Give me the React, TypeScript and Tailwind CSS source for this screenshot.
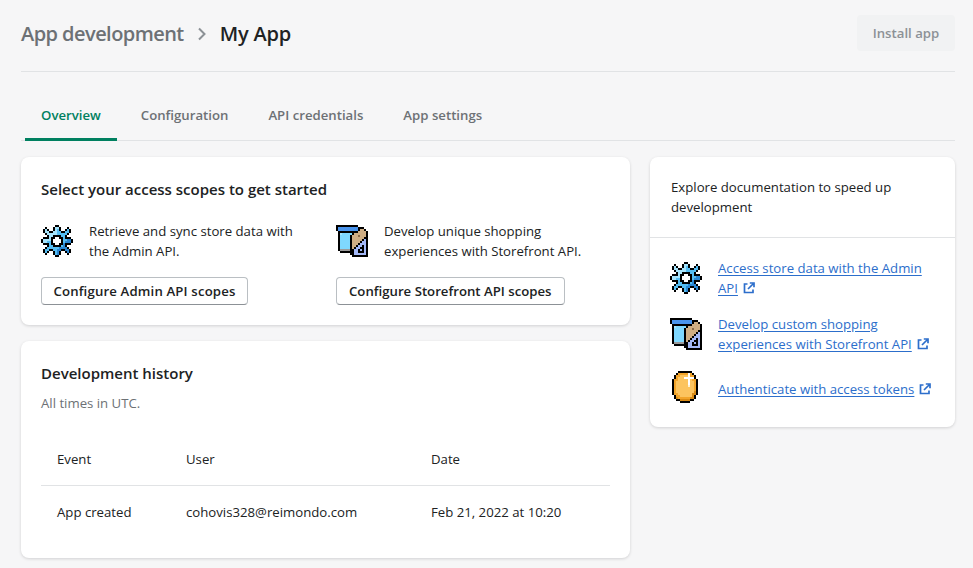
import React from 'react';

const palette: Record<string, string> = {
  K: '#000000',
  W: '#ffffff',
  L: '#a6e4fc',
  B: '#55bdf2',
  D: '#2a86d2',
  G: '#9a9a9a',
  S: '#7fd8ff',
  N: '#4a94ec',
  T: '#cfae84',
  U: '#8a6a48',
  P: '#a3b8f7',
  O: '#f2a42a',
  Y: '#fcc45f',
  R: '#d98a14',
  H: '#fff1d0',
};

const gear = [
  '.......KK.......',
  '..K...KLLK...K..',
  '.KLK..KLBK..KBK.',
  '.KLLKKLLBBKKBBK.',
  '..KLLLLLBBBBBK..',
  '...KLLKKKKBBK...',
  '.KKKLKKWWKKBKKK.',
  'KLLLLKWWWWKBBDDK',
  'KLLBBKWWWWKBDDDK',
  '.KKKBKKWWKKDKKK.',
  '...KBBKKKKBDK...',
  '..KBBBBBBDDDDK..',
  '.KBBKKBBDDKKDDK.',
  '.KBK..KBDK..KDK.',
  '..K...KBDK...K..',
  '.......KK.......',
];

const storefront = [
  'KKKKKKKKKKK.....',
  'KNNNNNNNNNNKKK..',
  'KNNNNNNNNNNKTTK.',
  '.KKKKKKKKKKTTTTK',
  '.KLSSSSSKTTTTTTK',
  '.KSSSSSKTTTUTTTK',
  '.KSSSSSKTTTTTTKK',
  '.KSSSSSKTTTTTKPK',
  '.KSSSSSKTTTTKPPK',
  '.KSSSSSKTTTKPPPK',
  '.KSSSSSKTTKPPKPK',
  '.KSSSSSKTKPPKKPK',
  '.KGGGGGKKPPKPKPK',
  '..KKKKKKKPPKKKPK',
  '.......KKPPPPPPK',
  '........KKKKKKKK',
];

const coin = [
  '...KKKKKKK...',
  '..KOOOOOWOK..',
  '.KOOYYYYWOOK.',
  '.KOYYYWWWWWK.',
  'KOOYYYYYWYOOK',
  'KOYYYYYYWYYOK',
  'KOYYYYYYWYYOK',
  'KOYYYYYYHYYOK',
  'KOYYYYYYYYYOK',
  'KOYYYYYYYYYOK',
  'KOYYYYYYYYYRK',
  'KOOYYYYYYYRRK',
  '.KOOYYYYYYRK.',
  '.KROOOOOORRK.',
  '..KKRRRRRKK..',
  '....KKKKK....',
];

function PixelIcon({ rows, className }: { rows: string[]; className?: string }) {
  return (
    <svg
      className={className}
      width={rows[0].length * 2}
      height={rows.length * 2}
      viewBox={`0 0 ${rows[0].length} ${rows.length}`}
      shapeRendering="crispEdges"
    >
      {rows.map((row, y) =>
        row.split('').map((c, x) =>
          c === '.' ? null : <rect key={`${x}-${y}`} x={x} y={y} width={1} height={1} fill={palette[c]} />
        )
      )}
    </svg>
  );
}

function ExternalIcon() {
  return (
    <svg className="inline-block ml-[5px] align-[-1px]" width="12" height="12" viewBox="0 0 12 12" fill="none">
      <path d="M4.5 2H1.5V10.5H10V7.5" stroke="#2c6ecb" strokeWidth="1.7" />
      <path d="M5 7L10 2M6.8 1H11V5.2" stroke="#2c6ecb" strokeWidth="1.7" />
    </svg>
  );
}

function DocLink({ children }: { children: React.ReactNode }) {
  return (
    <span>
      <a className="text-[#2c6ecb] underline underline-offset-2">{children}</a>
      <ExternalIcon />
    </span>
  );
}

export default function App() {
  const tabs = ['Overview', 'Configuration', 'API credentials', 'App settings'];

  return (
    <div className="bg-[#f6f6f7] pl-[21px] pr-[18px] pt-[15px] font-['Open_Sans',sans-serif] text-[13.2px] leading-[20px] text-[#202223] overflow-hidden h-[568px] w-[973px]">
      {/* Header */}
      <div className="flex items-center justify-between pb-[20px] border-b border-[#e1e3e5]">
        <div className="flex items-center pt-[2px] text-[20px] font-semibold tracking-[-0.2px] leading-[34px]">
          <span className="text-[#6d7175] tracking-[-0.55px]">App development</span>
          <svg className="ml-[13px] mr-[13px]" width="10" height="14" viewBox="0 0 10 14" fill="none">
            <path d="M2 1.5L7.5 7L2 12.5" stroke="#8c9196" strokeWidth="2" />
          </svg>
          <span>My App</span>
        </div>
        <button className="w-[98px] h-[36px] rounded bg-[#f1f2f3] text-[#8c9196] font-semibold">Install app</button>
      </div>

      {/* Tabs */}
      <div className="flex h-[50px] mt-[18px] px-[4px] border-b border-[#e1e3e5] box-content">
        {tabs.map((tab, i) => (
          <div
            key={tab}
            className={`px-[16px] pt-[2px] flex items-center h-[51px] mr-[8px] font-semibold border-b-[3px] ${
              i === 0 ? 'text-[#008060] border-[#008060]' : 'text-[#6d7175] border-transparent'
            }`}
          >
            {tab}
          </div>
        ))}
      </div>

      <div className="flex gap-[20px] mt-[16px] items-start">
        {/* Left column */}
        <div className="w-[609px] flex flex-col gap-[16px]">
          <section className="h-[168px] bg-white rounded-lg shadow-[0_1px_3px_rgba(63,63,68,0.2)] p-[20px]">
            <h2 className="text-[15px] font-semibold leading-[24px]">Select your access scopes to get started</h2>
            <div className="flex mt-[20px]">
              <div className="w-[295px]">
                <div className="flex items-center gap-[16px]">
                  <PixelIcon rows={gear} className="shrink-0" />
                  <p className="w-[215px]">Retrieve and sync store data with the Admin API.</p>
                </div>
                <button className="mt-[16px] h-[28px] w-[207px] tracking-[0.15px] bg-white border border-[#babfc3] border-b-[#8c9196] rounded font-semibold">
                  Configure Admin API scopes
                </button>
              </div>
              <div>
                <div className="flex items-center gap-[16px]">
                  <PixelIcon rows={storefront} className="shrink-0" />
                  <p className="w-[215px]">Develop unique shopping experiences with Storefront API.</p>
                </div>
                <button className="mt-[16px] h-[28px] px-[12px] bg-white border border-[#babfc3] border-b-[#8c9196] rounded font-semibold">
                  Configure Storefront API scopes
                </button>
              </div>
            </div>
          </section>

          <section className="h-[217px] bg-white rounded-lg shadow-[0_1px_3px_rgba(63,63,68,0.2)] pt-[20px] px-[20px]">
            <h2 className="text-[15px] font-semibold leading-[24px]">Development history</h2>
            <p className="mt-[8px] text-[#6d7175]">All times in UTC.</p>
            <table className="w-[569px] mt-[20px] table-fixed text-left">
              <tbody>
                <tr className="h-[52px] border-b border-[#e1e3e5]">
                  <td className="w-[145px] pl-[16px]">Event</td>
                  <td className="w-[245px]">User</td>
                  <td>Date</td>
                </tr>
                <tr className="h-[53px]">
                  <td className="pl-[16px]">App created</td>
                  <td>cohovis328@reimondo.com</td>
                  <td>Feb 21, 2022 at 10:20</td>
                </tr>
              </tbody>
            </table>
          </section>
        </div>

        {/* Right column */}
        <aside className="w-[305px] h-[270px] bg-white rounded-lg shadow-[0_1px_3px_rgba(63,63,68,0.2)]">
          <div className="h-[81px] px-[21px] pt-[20px] border-b border-[#e1e3e5]">
            Explore documentation to speed up development
          </div>
          <div className="px-[20px] pt-[20px] flex flex-col">
            <div className="flex gap-[16px] items-center h-[40px] mb-[16px]">
              <PixelIcon rows={gear} className="shrink-0" />
              <DocLink>Access store data with the Admin API</DocLink>
            </div>
            <div className="flex gap-[16px] items-center h-[40px] mb-[17px]">
              <PixelIcon rows={storefront} className="shrink-0" />
              <DocLink>Develop custom shopping experiences with Storefront API</DocLink>
            </div>
            <div className="flex gap-[20px] pl-[2px] items-center h-[32px] [&>span]:pt-[4px]">
              <PixelIcon rows={coin} className="shrink-0" />
              <DocLink>Authenticate with access tokens</DocLink>
            </div>
          </div>
        </aside>
      </div>
    </div>
  );
}
